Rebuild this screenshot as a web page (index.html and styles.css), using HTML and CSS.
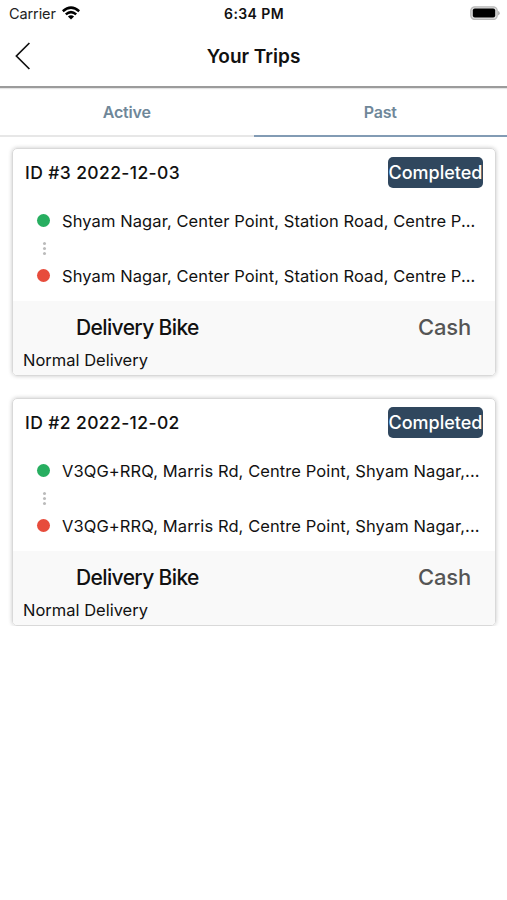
FILE: index.html
```html
<!DOCTYPE html>
<html lang="en">
<head>
<meta charset="utf-8">
<title>Your Trips</title>
<link rel="stylesheet" href="styles.css">
</head>
<body>
<div class="status">
  <div class="carrier"><span>Carrier</span>
    <svg class="wifi" width="18" height="14" viewBox="0 0 18 14" fill="none" stroke="#000" stroke-width="2.5"><path d="M.8 5.2Q9-2 17.2 5.2M3.8 8.4Q9 3.9 14.2 8.4"/><path d="M9 13.6 5.9 10.5Q9 7.9 12.1 10.5Z" fill="#000" stroke="none"/></svg>
  </div>
  <span class="time">6:34 PM</span>
  <svg class="battery" width="30" height="14" viewBox="0 0 30 14"><rect x=".8" y=".8" width="26.4" height="12.6" rx="4" fill="#ddd" stroke="#b9b9b9" stroke-width="1.3"/><rect x="2.8" y="2.5" width="22.4" height="9" rx="2" fill="#000"/><path d="M28.1 5v4.4q1.6-.6 1.6-2.2T28.1 5Z" fill="#aaa"/></svg>
</div>
<header class="header">
  <svg class="back" width="16" height="28" viewBox="0 0 16 28" fill="none" stroke="#111" stroke-width="1.7"><path d="M14.4 1 1.4 14l13 13"/></svg>
  <h1>Your Trips</h1>
</header>
<nav class="tabs"><div class="tab">Active</div><div class="tab selected">Past</div></nav>
<main class="trips">
  <article class="card">
    <div class="top"><span class="id">ID #3 2022-12-03</span><span class="badge"><span>Completed</span></span></div>
    <div class="route">
      <div class="stop"><i class="dot"></i><span>Shyam Nagar, Center Point, Station Road, Centre P...</span></div>
      <div class="dots"><i></i><i></i><i></i></div>
      <div class="stop"><i class="dot end"></i><span>Shyam Nagar, Center Point, Station Road, Centre P...</span></div>
    </div>
    <div class="foot"><div class="line"><span class="vehicle">Delivery Bike</span><span class="pay">Cash</span></div><div class="kind"><span>Normal Delivery</span></div></div>
  </article>
  <article class="card">
    <div class="top"><span class="id">ID #2 2022-12-02</span><span class="badge"><span>Completed</span></span></div>
    <div class="route">
      <div class="stop"><i class="dot"></i><span>V3QG+RRQ, Marris Rd, Centre Point, Shyam Nagar,...</span></div>
      <div class="dots"><i></i><i></i><i></i></div>
      <div class="stop"><i class="dot end"></i><span>V3QG+RRQ, Marris Rd, Centre Point, Shyam Nagar,...</span></div>
    </div>
    <div class="foot"><div class="line"><span class="vehicle">Delivery Bike</span><span class="pay">Cash</span></div><div class="kind"><span>Normal Delivery</span></div></div>
  </article>
</main>
</body>
</html>
```
FILE: styles.css
```css
* { box-sizing: border-box; }
body { margin: 0; background: #fff; color: #111; font-family: Inter, "Liberation Sans", sans-serif; }
span { white-space: nowrap; }
.status { height: 27px; display: grid; grid-template-columns: 1fr auto 1fr; align-items: center; padding: 0 7px 0 9px; }
.carrier { display: flex; align-items: center; gap: 6px; font-size: 14.5px; letter-spacing: -.1px; color: #222; }
.wifi { margin-top: -2px; }
.time { font-size: 14px; font-weight: 600; letter-spacing: .4px; margin-right: 1px; }
.battery { justify-self: end; margin-top: -1px; }
.header { height: 61px; display: grid; grid-template-columns: 1fr auto 1fr; align-items: center; padding: 0 15px 1px; border-bottom: 2px solid #9b9b9b; box-shadow: 0 1px 1px #e4e4e4; }
h1 { margin: 0; font-size: 19px; font-weight: 600; }
.tabs { height: 49px; display: flex; }
.tab { flex: 1; display: flex; align-items: center; justify-content: center; border-bottom: 2px solid #e7e7e7; color: #6f8799; font-size: 16px; font-weight: 600; letter-spacing: -.2px; }
.selected { border-color: #829bb4; }
.trips { padding: 11px 11px 0 12px; display: flex; flex-direction: column; gap: 22px; }
.card { height: 228px; display: flex; flex-direction: column; border: 1px solid #d9d9d9; border-radius: 5px; box-shadow: 0 0 4px #c8c8c8; overflow: hidden; }
.top { height: 46px; display: flex; align-items: center; justify-content: space-between; padding: 0 12px; }
.id { font-size: 17.5px; font-weight: 500; letter-spacing: .38px; }
.badge { width: 95px; height: 31px; border-radius: 5px; background: #30475e; color: #fff; display: flex; align-items: center; justify-content: center; font-size: 18px; font-weight: 500; }
.route { height: 106px; padding: 12px 0 0 24px; }
.stop { height: 27px; display: flex; align-items: center; gap: 12px; font-size: 16.5px; letter-spacing: .09px; }
.dot { width: 13px; height: 13px; border-radius: 50%; background: #27ae60; }
.end { background: #e74c3c; }
.dots { height: 28px; width: 14px; display: flex; flex-direction: column; align-items: center; justify-content: center; gap: 2px; }
.dots i { width: 3px; height: 3px; border-radius: 50%; background: #bbb; }
.foot { flex: 1; background: #f9f9f9; }
.line { height: 50px; display: flex; align-items: center; justify-content: space-between; padding: 2px 24px 0 63px; font-weight: 500; }
.vehicle { font-size: 21px; letter-spacing: -.62px; }
.pay { font-size: 22px; letter-spacing: -.2px; color: #555; }
.kind { padding-left: 10px; font-size: 16.5px; line-height: 20px; margin-top: -1px; }
```
